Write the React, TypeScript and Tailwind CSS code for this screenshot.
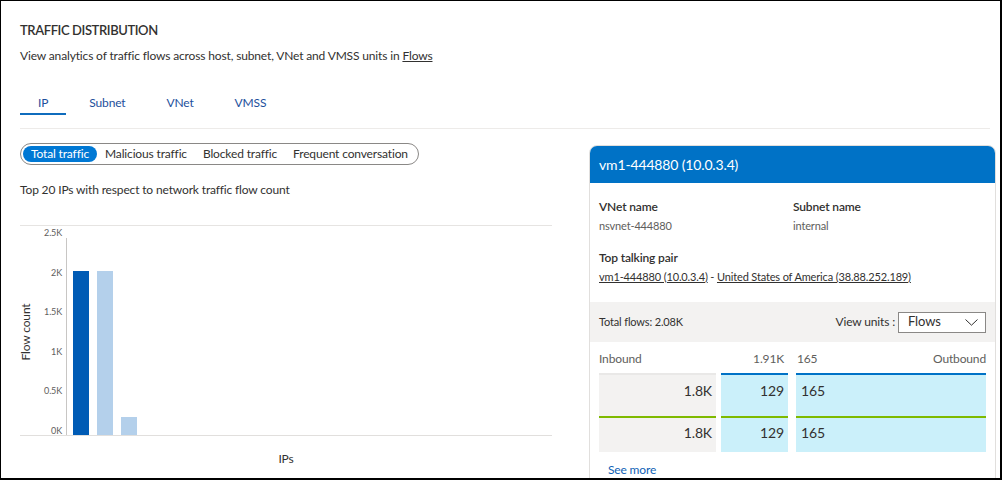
const TABS = ["IP", "Subnet", "VNet", "VMSS"]
const FILTERS = ["Total traffic", "Malicious traffic", "Blocked traffic", "Frequent conversation"]

const TICKS = [
  { label: "2.5K", y: 16 },
  { label: "2K", y: 55.5 },
  { label: "1.5K", y: 95 },
  { label: "1K", y: 134.5 },
  { label: "0.5K", y: 174 },
  { label: "0K", y: 213.5 },
]

const BARS = [
  { x: 53, y: 51, h: 164, fill: "#005bb5" },
  { x: 77, y: 51, h: 164, fill: "#b4d0eb" },
  { x: 101, y: 197, h: 18, fill: "#b4d0eb" },
]

function Chart() {
  return (
    <svg width="533" height="255" className="overflow-visible block">
      <line x1="0" y1="5.5" x2="532" y2="5.5" stroke="#e6e4e2" />
      <line x1="0" y1="215.5" x2="532" y2="215.5" stroke="#e1dfdd" />
      <line x1="46.5" y1="18" x2="46.5" y2="215" stroke="#c8c6c4" />
      {TICKS.map((t) => (
        <text key={t.label} x="42" y={t.y} textAnchor="end" fontSize="9" fill="#605e5c">
          {t.label}
        </text>
      ))}
      {BARS.map((b, i) => (
        <rect key={i} x={b.x} y={b.y} width="16" height={b.h} fill={b.fill} />
      ))}
      <text
        x="5.5"
        y="112"
        fontSize="12"
        fill="#323130"
        textAnchor="middle"
        dominantBaseline="central"
        transform="rotate(-90 5.5 112)"
      >
        Flow count
      </text>
      <text x="266" y="243" fontSize="12" fill="#323130" textAnchor="middle">
        IPs
      </text>
    </svg>
  )
}

function DetailsCard() {
  return (
    <div className="w-[407px] border border-[#e1dfdd] rounded-t-[8px] overflow-hidden shrink-0">
      <div className="h-[37px] bg-[#0072c6] px-[9px] flex items-center text-white text-[14px]">
        vm1-444880 (10.0.3.4)
      </div>

      <div className="px-[9px] pt-[16px]">
        <div className="grid grid-cols-[194px_1fr] text-[12px] leading-[16px]">
          <div>
            <div className="font-semibold">VNet name</div>
            <div className="mt-[3px] text-[11px] text-[#605e5c]">nsvnet-444880</div>
          </div>
          <div>
            <div className="font-semibold">Subnet name</div>
            <div className="mt-[3px] text-[11px] text-[#605e5c]">internal</div>
          </div>
        </div>
        <div className="mt-[16px] text-[12px] leading-[16px] font-semibold">Top talking pair</div>
        <div className="mt-[3px] text-[11px] leading-[16px]">
          <span className="underline">vm1-444880 (10.0.3.4)</span> -{" "}
          <span className="underline">United States of America (38.88.252.189)</span>
        </div>
      </div>

      <div className="mt-[17px] h-[40px] bg-[#f3f2f1] px-[9px] flex items-center justify-between text-[11px]">
        <span>Total flows: 2.08K</span>
        <div className="flex items-center gap-[3px]">
          <span className="text-[12px]">View units :</span>
          <div className="w-[88px] h-[21px] border border-[#8a8886] bg-white flex items-center justify-between pl-[9px] pr-[7px] text-[13px]">
            <span>Flows</span>
            <svg width="13" height="7" viewBox="0 0 13 7" className="block">
              <path d="M0.5 0.5 L6.5 6.2 L12.5 0.5" fill="none" stroke="#323130" strokeWidth="1" />
            </svg>
          </div>
        </div>
      </div>

      <div className="px-[9px]">
        <div className="mt-[9px] flex text-[12px] leading-[16px] text-[#605e5c]">
          <div className="w-[117px]">Inbound</div>
          <div className="w-[67px] ml-[5px] text-right pr-[4px]">1.91K</div>
          <div className="w-[190px] ml-[8px] flex justify-between pl-[1px]">
            <span>165</span>
            <span>Outbound</span>
          </div>
        </div>

        <div className="mt-[6px] flex text-[14px] leading-[18px] text-[#323130]">
          <div className="w-[117px] border-t-2 border-[#e9e8e7] bg-[#f3f2f1]">
            <div className="h-[41px] pt-[7px] pr-[4px] text-right">1.8K</div>
            <div className="h-[36px] border-t-2 border-[#7fba00] pt-[6px] pr-[4px] text-right">1.8K</div>
          </div>
          <div className="w-[67px] ml-[5px] border-t-2 border-[#0072c6] bg-[#cbf0fa]">
            <div className="h-[41px] pt-[7px] pr-[4px] text-right">129</div>
            <div className="h-[36px] border-t-2 border-[#7fba00] pt-[6px] pr-[4px] text-right">129</div>
          </div>
          <div className="w-[190px] ml-[8px] border-t-2 border-[#0072c6] bg-[#cbf0fa]">
            <div className="h-[41px] pt-[7px] pl-[5px]">165</div>
            <div className="h-[36px] border-t-2 border-[#7fba00] pt-[6px] pl-[5px]">165</div>
          </div>
        </div>

        <div className="mt-[10px] ml-[9px] text-[12px] leading-[16px] text-[#0f5fb5]">See more</div>
        <div className="h-[30px]" />
      </div>
    </div>
  )
}

export default function App() {
  return (
    <div className="w-[1002px] h-[480px] overflow-hidden bg-white border-l border-t border-r-2 border-b-2 border-black text-[#323130] tracking-[-0.15px] font-['Segoe_UI',Lato,sans-serif]">
      <div className="pl-[19px] pr-[10px]">
        <h2 className="pt-[20px] text-[13px] leading-[18px] font-semibold tracking-[-0.4px]">TRAFFIC DISTRIBUTION</h2>
        <p className="mt-[9px] text-[12px] leading-[16px]">
          View analytics of traffic flows across host, subnet, VNet and VMSS units in{" "}
          <span className="underline">Flows</span>
        </p>

        <div className="mt-[30px] flex gap-[5px] text-[12px] leading-[18px] text-[#1d4f9c]">
          {TABS.map((t, i) => (
            <div
              key={t}
              className={`px-[18px] pb-[1px] border-b-[2px] ${i === 0 ? "border-[#0f6cbd]" : "border-transparent"}`}
            >
              {t}
            </div>
          ))}
        </div>
        <div className="mt-[13px] h-px bg-[#edebe9]" />

        <div className="flex">
          <div className="w-[533px] shrink-0">
            <div className="mt-[14px] inline-flex border border-[#8a8886] rounded-full p-[2px] text-[12px] leading-[16px]">
              {FILTERS.map((f, i) => (
                <div
                  key={f}
                  className={`px-[8px] rounded-full ${i === 0 ? "bg-[#0078d4] text-white" : "text-[#323130]"}`}
                >
                  {f}
                </div>
              ))}
            </div>
            <p className="mt-[17px] text-[12px] leading-[16px]">Top 20 IPs with respect to network traffic flow count</p>
            <div className="mt-[22px]">
              <Chart />
            </div>
          </div>

          <div className="ml-[36px] mt-[16px]">
            <DetailsCard />
          </div>
        </div>
      </div>
    </div>
  )
}
